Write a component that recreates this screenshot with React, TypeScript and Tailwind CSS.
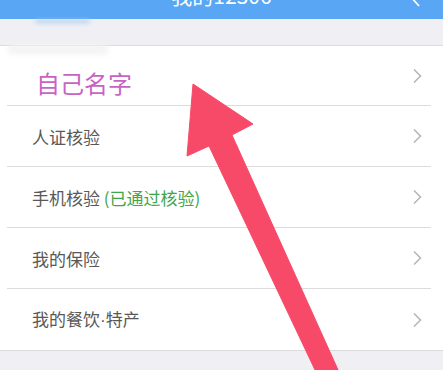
import React from 'react';

const rows = [
  { label: '人证核验' },
  { label: '手机核验', note: '(已通过核验)' },
  { label: '我的保险' },
  { label: '我的餐饮', tail: '特产' },
];

function Chevron() {
  return (
    <svg width="10" height="16" viewBox="0 0 10 16" className="shrink-0">
      <path d="M2 1.5 L8.5 8 L2 14.5" fill="none" stroke="#b5b5b5" strokeWidth="1.5" />
    </svg>
  );
}

export default function App() {
  return (
    <div
      className="relative w-[443px] h-[370px] overflow-hidden bg-[#f0f0f4]"
      style={{ fontFamily: '"Noto Sans CJK SC", "Noto Sans", sans-serif' }}
    >
      {/* header, cropped at the top */}
      <div className="relative h-[19px] bg-[#58a6f4] overflow-hidden">
        <div className="absolute left-0 right-0 top-[-19px] text-center text-white text-[21px] leading-[28px]">
          我的12306
        </div>
        <svg width="12" height="20" viewBox="0 0 12 20" className="absolute right-[22px] top-[-13px]">
          <path d="M10 1 L2 10 L10 19" fill="none" stroke="#ffffff" strokeWidth="1.8" />
        </svg>
      </div>

      <div className="h-[26px]" />

      <div className="bg-white border-t border-b border-[#dcdcdc]">
        <div className="flex items-center justify-between h-[60px] ml-[7px] mr-[12px] pl-[29px] pr-[9px] border-b border-[#dcdcdc]">
          <span className="text-[24px] leading-none text-[#c863c4] pt-[14px]">自己名字</span>
          <Chevron />
        </div>
        {rows.map((r, i) => (
          <div
            key={r.label}
            className={`flex items-center justify-between h-[61px] ml-[7px] mr-[12px] pl-[25px] pr-[9px] ${
              i < rows.length - 1 ? 'border-b border-[#dcdcdc]' : ''
            }`}
          >
            <span className="text-[17px] leading-none text-[#585858]">
              {r.label}
              {r.tail && (
                <>
                  <span style={{ fontFamily: '"Liberation Sans", sans-serif' }}>·</span>
                  {r.tail}
                </>
              )}
              {r.note && <span className="text-[#3ea64b]"> {r.note}</span>}
            </span>
            <Chevron />
          </div>
        ))}
      </div>

      {/* blurred smudges */}
      <div className="absolute left-[35px] top-[20px] w-[55px] h-[3px] bg-[#a9cdf3] blur-[2px] rounded-full" />
      <div className="absolute left-[8px] top-[45px] w-[100px] h-[9px] bg-[#f2f2f4] blur-[3px]" />

      {/* red arrow overlay */}
      <svg width="443" height="370" viewBox="0 0 443 370" className="absolute left-0 top-0 pointer-events-none">
        <polygon
          points="193,84 253,124 232,135 339,372 316,372 209,146 187,156"
          fill="#f74a69"
          stroke="#f74a69"
          strokeWidth="1"
          strokeLinejoin="round"
        />
      </svg>
    </div>
  );
}
